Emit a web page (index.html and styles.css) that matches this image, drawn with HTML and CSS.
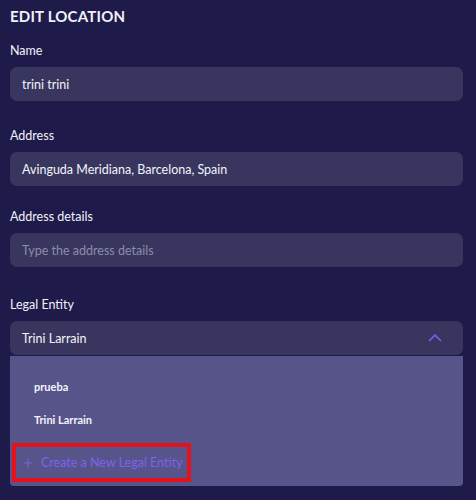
FILE: index.html
```html
<!DOCTYPE html>
<html lang="en">
<head>
<meta charset="utf-8">
<title>Edit Location</title>
<link rel="stylesheet" href="styles.css">
</head>
<body>
<main class="panel">
  <h1 class="title">EDIT LOCATION</h1>
  <div class="group">
    <label class="label">Name</label>
    <div class="field">trini trini</div>
  </div>
  <div class="group">
    <label class="label">Address</label>
    <div class="field">Avinguda Meridiana, Barcelona, Spain</div>
  </div>
  <div class="group group-tight">
    <label class="label">Address details</label>
    <div class="field placeholder">Type the address details</div>
  </div>
  <div class="group">
    <label class="label">Legal Entity</label>
    <div class="field select">
      <span>Trini Larrain</span>
      <svg class="chevron" width="14" height="8" viewBox="0 0 14 8"><polyline points="1,7 7,1.2 13,7" fill="none" stroke="#7f5cf0" stroke-width="1.6"/></svg>
    </div>
    <div class="dropdown">
      <div class="option">prueba</div>
      <div class="option">Trini Larrain</div>
      <div class="create">
        <svg class="plus" width="10" height="10" viewBox="0 0 10 10"><path d="M5 0.5V9.5M0.5 5H9.5" stroke="#7a66c8" stroke-width="1.2" fill="none"/></svg>
        <span>Create a New Legal Entity</span>
      </div>
    </div>
  </div>
</main>
</body>
</html>
```
FILE: styles.css
```css
html, body {
  margin: 0;
  padding: 0;
  background: #1e1b4b;
}
body {
  font-family: Lato, "Noto Sans", sans-serif;
  color: #f2f1f8;
}
.panel {
  padding: 6px 13px 0 10px;
}
.title {
  margin: 0 0 17px;
  font-size: 15px;
  line-height: 20px;
  font-weight: 700;
  letter-spacing: 0.2px;
}
.group {
  margin-bottom: 27px;
}
.group-tight {
  margin-bottom: 30px;
}
.group-tight .label {
  margin-top: -4px;
}
.label {
  display: block;
  font-size: 12.5px;
  line-height: 16px;
  margin-bottom: 8px;
}
.field {
  height: 34px;
  box-sizing: border-box;
  background: #38365e;
  border-radius: 7px;
  padding: 0 12px;
  display: flex;
  align-items: center;
  font-size: 12.5px;
  color: #f4f3fa;
}
.placeholder {
  color: #8d8bab;
}
.select {
  justify-content: space-between;
  padding-right: 21px;
}
.chevron {
  display: block;
}
.dropdown {
  margin-top: 1px;
  background: #57548a;
  border-radius: 0 0 4px 4px;
  padding: 14px 0 4px;
}
.option {
  height: 33px;
  line-height: 33px;
  padding: 0 24px;
  font-size: 11px;
  font-weight: 700;
  color: #f4f3fa;
}
.create {
  margin: 7px 0 0 2px;
  width: 179px;
  height: 39px;
  box-sizing: border-box;
  border: 4px solid #e3121c;
  display: flex;
  align-items: center;
  gap: 8px;
  padding-left: 7px;
  font-size: 12.5px;
  white-space: nowrap;
  color: #7d62ec;
}
.plus {
  display: block;
  flex: none;
}
```
